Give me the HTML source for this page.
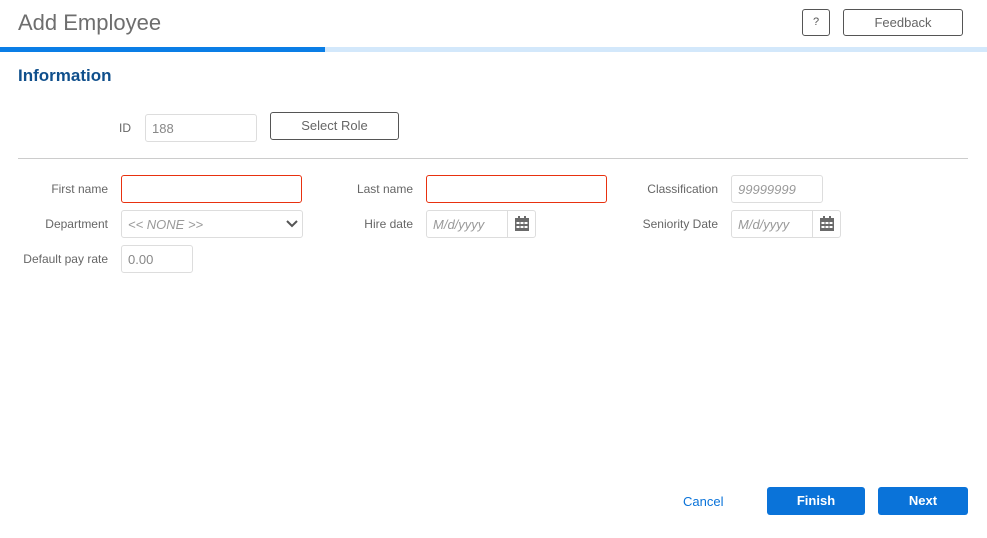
<!DOCTYPE html>
<html><head><style>
*{box-sizing:border-box;margin:0;padding:0}
body{width:987px;height:538px;background:#fff;font-family:"Liberation Sans",sans-serif;position:relative;overflow:hidden;color:#666}
.a{position:absolute}
.lbl{font-size:12px;color:#666;text-align:right}
.inp{position:absolute;border:1px solid #ddd;border-radius:3px;height:28px;font-size:13px;color:#888;padding:6px 6px}
.red{border-color:#e8310f}
.it{font-style:italic;color:#999}
.cal{position:absolute;right:0;top:0;width:28px;height:26px;border-left:1px solid #ddd}
.btn{position:absolute;border-radius:3px;font-size:13px;font-weight:bold;color:#fff;background:#0a73d9;text-align:center;line-height:28px}
</style></head><body>
<div class="a" style="left:18px;top:10px;font-size:22px;color:#6e6e6e">Add Employee</div>
<div class="a" style="left:802px;top:9px;width:28px;height:27px;border:1px solid #555;border-radius:3px;font-size:11px;text-align:center;line-height:25px;color:#555">?</div>
<div class="a" style="left:843px;top:9px;width:120px;height:27px;border:1px solid #555;border-radius:3px;font-size:13px;text-align:center;line-height:25px;color:#666">Feedback</div>
<div class="a" style="left:0;top:47px;width:987px;height:5px;background:#d3e8fb"></div>
<div class="a" style="left:0;top:47px;width:325px;height:5px;background:#0a7ee6"></div>
<div class="a" style="left:18px;top:66px;font-size:17px;font-weight:bold;color:#0f4f8c">Information</div>
<div class="a lbl" style="left:100px;top:121px;width:31px">ID</div>
<div class="inp" style="left:145px;top:114px;width:112px">188</div>
<div class="a" style="left:270px;top:112px;width:129px;height:28px;border:1px solid #555;border-radius:3px;font-size:13px;text-align:center;line-height:26px;color:#666">Select Role</div>
<div class="a" style="left:18px;top:158px;width:950px;height:1px;background:#ccc"></div>

<div class="a lbl" style="left:10px;top:182px;width:98px">First name</div>
<div class="inp red" style="left:121px;top:175px;width:181px"></div>
<div class="a lbl" style="left:320px;top:182px;width:93px">Last name</div>
<div class="inp red" style="left:426px;top:175px;width:181px"></div>
<div class="a lbl" style="left:620px;top:182px;width:98px">Classification</div>
<div class="inp it" style="left:731px;top:175px;width:92px">99999999</div>

<div class="a lbl" style="left:10px;top:217px;width:98px">Department</div>
<div class="inp it" style="left:121px;top:210px;width:182px">&lt;&lt; NONE &gt;&gt;
<svg class="a" style="right:4px;top:8px" width="12" height="10" viewBox="0 0 12 10"><path d="M1 2l5 5 5-5" stroke="#555" stroke-width="2" fill="none"/></svg></div>
<div class="a lbl" style="left:320px;top:217px;width:93px">Hire date</div>
<div class="inp it" style="left:426px;top:210px;width:110px">M/d/yyyy<div class="cal"><svg class="a" style="left:7px;top:5px" width="14" height="15" viewBox="0 0 14 15"><rect x="0" y="2" width="14" height="13" fill="#6a6a6a"/><rect x="3" y="0" width="2" height="4" fill="#6a6a6a"/><rect x="9" y="0" width="2" height="4" fill="#6a6a6a"/><g fill="#fff"><rect x="1.5" y="6" width="3" height="2"/><rect x="5.5" y="6" width="3" height="2"/><rect x="9.5" y="6" width="3" height="2"/><rect x="1.5" y="10" width="3" height="2"/><rect x="5.5" y="10" width="3" height="2"/><rect x="9.5" y="10" width="3" height="2"/></g></svg></div></div>
<div class="a lbl" style="left:620px;top:217px;width:98px">Seniority Date</div>
<div class="inp it" style="left:731px;top:210px;width:110px">M/d/yyyy<div class="cal"><svg class="a" style="left:7px;top:5px" width="14" height="15" viewBox="0 0 14 15"><rect x="0" y="2" width="14" height="13" fill="#6a6a6a"/><rect x="3" y="0" width="2" height="4" fill="#6a6a6a"/><rect x="9" y="0" width="2" height="4" fill="#6a6a6a"/><g fill="#fff"><rect x="1.5" y="6" width="3" height="2"/><rect x="5.5" y="6" width="3" height="2"/><rect x="9.5" y="6" width="3" height="2"/><rect x="1.5" y="10" width="3" height="2"/><rect x="5.5" y="10" width="3" height="2"/><rect x="9.5" y="10" width="3" height="2"/></g></svg></div></div>

<div class="a lbl" style="left:10px;top:252px;width:98px">Default pay rate</div>
<div class="inp" style="left:121px;top:245px;width:72px">0.00</div>

<div class="a" style="left:683px;top:494px;font-size:13px;color:#0a73d9">Cancel</div>
<div class="btn" style="left:767px;top:487px;width:98px">Finish</div>
<div class="btn" style="left:878px;top:487px;width:90px">Next</div>
</body></html>
